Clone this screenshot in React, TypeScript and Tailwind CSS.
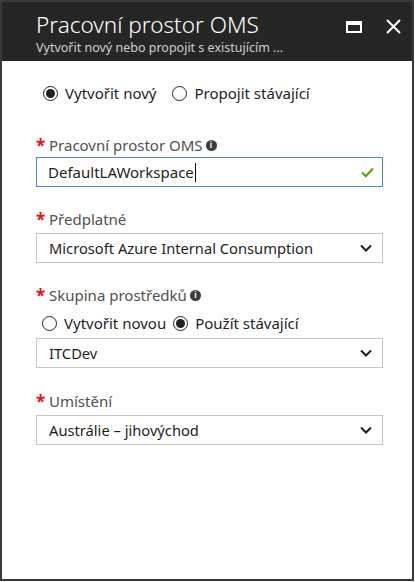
import React from "react";

const font = { fontFamily: '"Segoe UI", "Noto Sans", "Open Sans", sans-serif' };

function Radio({ checked, label }: { checked?: boolean; label: string }) {
  return (
    <label className="flex items-center gap-[7px]">
      <span className="flex h-[15px] w-[15px] items-center justify-center rounded-full border border-[#222]">
        {checked && <span className="h-[9px] w-[9px] rounded-full bg-[#222]" />}
      </span>
      <span className="text-[15px] text-[#1e1e1e]">{label}</span>
    </label>
  );
}

function InfoDot() {
  return (
    <span className="ml-[3px] inline-flex h-[11px] w-[11px] items-center justify-center rounded-full bg-[#3c3c3c] text-[8px] font-bold leading-none text-white">
      i
    </span>
  );
}

function FieldLabel({ text, info }: { text: string; info?: boolean }) {
  return (
    <div className="flex h-5 items-center">
      <span className="w-[13px] text-[17px] font-bold leading-none text-[#e81123]">*</span>
      <span className="text-[15px] text-[#505050]">{text}</span>
      {info && <InfoDot />}
    </div>
  );
}

function Chevron() {
  return (
    <svg width="12" height="8" viewBox="0 0 12 8" className="shrink-0">
      <path d="M1 1.5 L6 6.5 L11 1.5" fill="none" stroke="#1e1e1e" strokeWidth="2" />
    </svg>
  );
}

function Select({ value }: { value: string }) {
  return (
    <div className="flex h-[30px] items-center justify-between border border-[#c6c6c6] pl-[12px] pr-[10px]">
      <span className="text-[14.7px] text-[#1e1e1e]">{value}</span>
      <Chevron />
    </div>
  );
}

export default function App() {
  return (
    <div className="h-[581px] w-[414px] border-2 border-[#3a3a3a] bg-white" style={font}>
      <div className="flex h-[59px] items-start justify-between bg-[#262626] pl-[34px] pr-[11px]">
        <div className="pt-[10px]">
          <h1 className="text-[22.5px] font-light leading-[26px] text-white">Pracovní prostor OMS</h1>
          <p className="mt-[2px] text-[12.5px] leading-[16px] text-[#cfcfcf]">
            Vytvořit nový nebo propojit s existujícím ...
          </p>
        </div>
        <div className="flex items-center gap-[24px] pt-[17px]">
          <svg width="16" height="12" viewBox="0 0 16 12">
            <rect x="1" y="1" width="14" height="10" fill="none" stroke="white" strokeWidth="2" />
            <rect x="1" y="1" width="14" height="3" fill="white" />
          </svg>
          <svg width="15" height="15" viewBox="0 0 15 15">
            <path d="M1 1 L14 14 M14 1 L1 14" stroke="white" strokeWidth="2" />
          </svg>
        </div>
      </div>

      <div className="pl-[34px] pr-[29px]">
        <div className="mt-[22px] flex h-5 items-center gap-[16px] pl-[7px]">
          <Radio checked label="Vytvořit nový" />
          <Radio label="Propojit stávající" />
        </div>

        <div className="mt-[32px]">
          <FieldLabel text="Pracovní prostor OMS" info />
        </div>
        <div className="mt-[2px] flex h-[30px] items-center justify-between border border-[#4a83d4] pl-[11px] pr-[8px]">
          <span className="flex items-center text-[15px] text-[#1e1e1e]">
            DefaultLAWorkspace
            <span className="ml-[1px] h-[19px] w-px bg-black" />
          </span>
          <svg width="13" height="11" viewBox="0 0 13 11">
            <path d="M1 5.5 L4.8 9.3 L12 1.5" fill="none" stroke="#57a300" strokeWidth="2" />
          </svg>
        </div>

        <div className="mt-[22px]">
          <FieldLabel text="Předplatné" />
        </div>
        <div className="mt-[4px]">
          <Select value="Microsoft Azure Internal Consumption" />
        </div>

        <div className="mt-[22px]">
          <FieldLabel text="Skupina prostředků" info />
        </div>
        <div className="mt-[8px] flex h-5 items-center gap-[7px] pl-[6px]">
          <Radio label="Vytvořit novou" />
          <Radio checked label="Použít stávající" />
        </div>
        <div className="mt-[5px]">
          <Select value="ITCDev" />
        </div>

        <div className="mt-[23px]">
          <FieldLabel text="Umístění" />
        </div>
        <div className="mt-[4px]">
          <Select value="Austrálie – jihovýchod" />
        </div>
      </div>
    </div>
  );
}
